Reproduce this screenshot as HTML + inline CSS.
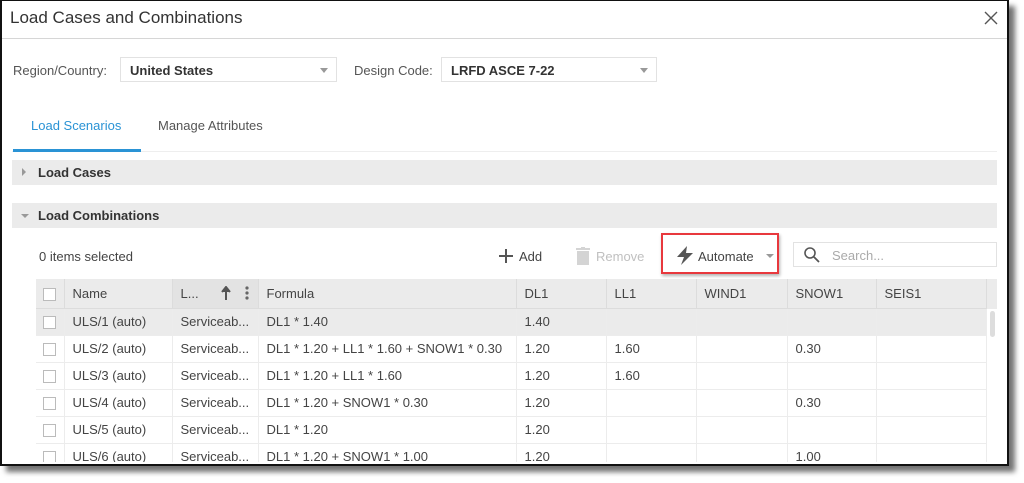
<!DOCTYPE html>
<html><head><meta charset="utf-8"><style>
*{margin:0;padding:0;box-sizing:border-box}
body{width:1024px;height:483px;background:#fff;position:relative;overflow:hidden;font-family:"Liberation Sans",sans-serif;color:#3c3c3c}
.a{position:absolute}
#dlg{left:0;top:0;width:1009px;height:466px;border:2px solid #111;border-top-width:1px;background:#fff;box-shadow:6px 6px 5px rgba(0,0,0,.55);overflow:hidden}
.t{font-size:13px;white-space:nowrap}
.sel{border:1px solid #e2e2e2;height:25px;background:#fff}
.sel span{position:absolute;left:9px;top:5px;font-size:13px;color:#333;font-weight:bold}
.caret{position:absolute;width:0;height:0;border-left:4px solid transparent;border-right:4px solid transparent;border-top:5px solid #999}
.bar{background:#ebebeb;height:25px;left:10px;width:985px}
.bar b{position:absolute;left:26px;top:5px;font-size:13px;color:#333}
table{border-collapse:collapse;table-layout:fixed;font-size:13px;color:#444}
td{height:27px;border-bottom:1px solid #ececec;border-right:1px solid #ececec;padding-left:8px;white-space:nowrap;overflow:hidden}
tr.h td{height:29px;background:#ebebeb;border-color:#dcdcdc;color:#444}
tr.g td{background:#ebebeb}
.cb{display:inline-block;width:13px;height:13px;border:1px solid #bbb;background:#fff;vertical-align:middle;margin-left:-1px}
</style></head><body>
<div id="dlg" class="a">
 <div class="a t" style="left:8px;top:7px;font-size:17px;color:#333">Load Cases and Combinations</div>
 <svg class="a" style="left:982px;top:10px" width="14" height="14"><path d="M1 1L13 13M13 1L1 13" stroke="#555" stroke-width="1.4"/></svg>
 <div class="a" style="left:0;top:37px;width:1009px;height:1px;background:#d6d6d6"></div>

 <div class="a t" style="left:11px;top:62px;color:#555">Region/Country:</div>
 <div class="a sel" style="left:118px;top:56px;width:217px"><span>United States</span><i class="caret" style="left:199px;top:10px"></i></div>
 <div class="a t" style="left:352px;top:62px;color:#555">Design Code:</div>
 <div class="a sel" style="left:439px;top:56px;width:216px"><span>LRFD ASCE 7-22</span><i class="caret" style="left:198px;top:10px"></i></div>

 <div class="a t" style="left:29px;top:117px;color:#2a93d5">Load Scenarios</div>
 <div class="a t" style="left:156px;top:117px;color:#555">Manage Attributes</div>
 <div class="a" style="left:10px;top:150px;width:985px;height:1px;background:#eee"></div>
 <div class="a" style="left:11px;top:148px;width:128px;height:3px;background:#2a93d5"></div>

 <div class="a bar" style="top:159px"><i class="caret" style="left:10px;top:8px;border-top:4px solid transparent;border-bottom:4px solid transparent;border-left:4px solid #999;border-right:0"></i><b>Load Cases</b></div>
 <div class="a bar" style="top:202px"><i class="caret" style="left:9px;top:11px;border-top-width:4px"></i><b>Load Combinations</b></div>

 <div class="a t" style="left:37px;top:248px;color:#444">0 items selected</div>
 <svg class="a" style="left:497px;top:248px" width="14" height="14"><path d="M7 0V14M0 7H14" stroke="#555" stroke-width="2"/></svg>
 <div class="a t" style="left:517px;top:248px;color:#444">Add</div>
 <svg class="a" style="left:574px;top:246px" width="14" height="18"><rect x="1" y="4" width="12" height="14" fill="#d4d4d4"/><rect x="0" y="1" width="14" height="2" fill="#d4d4d4"/><rect x="5" y="0" width="4" height="2" fill="#d4d4d4"/></svg>
 <div class="a t" style="left:594px;top:248px;color:#c0c0c0">Remove</div>
 <div class="a" style="left:659px;top:232px;width:118px;height:41px;border:2px solid #e8383d;box-shadow:1px 2px 3px rgba(0,0,0,.3)"></div>
 <svg class="a" style="left:674px;top:245px" width="18" height="20"><path d="M11 0L1 11H8L5 19L17 7H10Z" fill="#555"/></svg>
 <div class="a t" style="left:696px;top:248px;color:#444">Automate</div>
 <i class="a caret" style="left:764px;top:253px;border-top-width:4px"></i>
 <div class="a" style="left:791px;top:241px;width:204px;height:25px;border:1px solid #e2e2e2"></div>
 <svg class="a" style="left:802px;top:246px" width="16" height="16"><circle cx="6" cy="6" r="5" fill="none" stroke="#555" stroke-width="1.6"/><path d="M10 10L15 15" stroke="#555" stroke-width="1.8"/></svg>
 <div class="a t" style="left:830px;top:247px;color:#aaa">Search...</div>

 <div class="a" style="left:36px;top:278px;width:959px;height:30px;background:#ebebeb"></div>
 <div class="a" style="left:988px;top:310px;width:5px;height:26px;border-radius:3px;background:#ddd"></div>
 <div class="a" style="left:34px;top:278px;width:952px;height:183px;overflow:hidden">
 <table style="width:950px">
  <colgroup><col style="width:28px"><col style="width:108px"><col style="width:86px"><col style="width:258px"><col style="width:90px"><col style="width:90px"><col style="width:91px"><col style="width:89px"><col style="width:110px"></colgroup>
  <tr class="h"><td><span class="cb"></span></td><td>Name</td><td style="background:#e3e3e3">L...<svg style="margin-left:22px;vertical-align:-2px" width="10" height="14"><path d="M5 1V14M1 6L5 1L9 6" stroke="#555" stroke-width="2" fill="#555"/></svg><svg style="margin-left:14px;vertical-align:-2px" width="4" height="14"><circle cx="2" cy="2" r="1.6" fill="#666"/><circle cx="2" cy="7" r="1.6" fill="#666"/><circle cx="2" cy="12" r="1.6" fill="#666"/></svg></td><td>Formula</td><td>DL1</td><td>LL1</td><td>WIND1</td><td>SNOW1</td><td>SEIS1</td></tr>
  <tr class="g"><td><span class="cb"></span></td><td>ULS/1 (auto)</td><td>Serviceab...</td><td>DL1 * 1.40</td><td>1.40</td><td></td><td></td><td></td><td></td></tr>
  <tr><td><span class="cb"></span></td><td>ULS/2 (auto)</td><td>Serviceab...</td><td>DL1 * 1.20 + LL1 * 1.60 + SNOW1 * 0.30</td><td>1.20</td><td>1.60</td><td></td><td>0.30</td><td></td></tr>
  <tr><td><span class="cb"></span></td><td>ULS/3 (auto)</td><td>Serviceab...</td><td>DL1 * 1.20 + LL1 * 1.60</td><td>1.20</td><td>1.60</td><td></td><td></td><td></td></tr>
  <tr><td><span class="cb"></span></td><td>ULS/4 (auto)</td><td>Serviceab...</td><td>DL1 * 1.20 + SNOW1 * 0.30</td><td>1.20</td><td></td><td></td><td>0.30</td><td></td></tr>
  <tr><td><span class="cb"></span></td><td>ULS/5 (auto)</td><td>Serviceab...</td><td>DL1 * 1.20</td><td>1.20</td><td></td><td></td><td></td><td></td></tr>
  <tr><td><span class="cb"></span></td><td>ULS/6 (auto)</td><td>Serviceab...</td><td>DL1 * 1.20 + SNOW1 * 1.00</td><td>1.20</td><td></td><td></td><td>1.00</td><td></td></tr>
 </table>
 </div>
</div>
</body></html>
